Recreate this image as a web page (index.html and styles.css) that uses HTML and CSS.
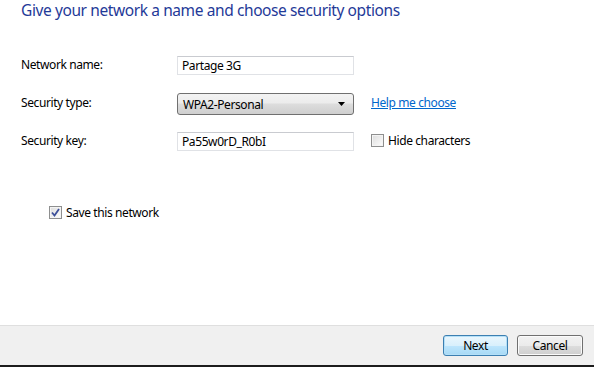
FILE: index.html
```html
<!DOCTYPE html>
<html lang="en">
  <head>
    <meta charset="UTF-8" />
    <title>Set up an ad hoc network</title>
    <link rel="stylesheet" href="styles.css">
  </head>
  <body>
    <div class="window">
      <div class="main">
        <h1 class="title">Give your network a name and choose security options</h1>

        <div class="form">
          <label class="label">Network name:</label>
          <div class="textbox">Partage 3G</div>
          <div></div>

          <label class="label">Security type:</label>
          <div class="select">
            <span>WPA2-Personal</span>
            <svg class="arrow" width="7" height="4" viewBox="0 0 7 4">
              <path d="M0 0 H7 L3.5 4 Z" fill="#000" />
            </svg>
          </div>
          <a class="link" href="#">Help me choose</a>

          <label class="label">Security key:</label>
          <div class="textbox">Pa55w0rD_R0bI</div>
          <div class="option">
            <span class="check"></span>
            <span>Hide characters</span>
          </div>
        </div>

        <div class="option save">
          <span class="check checked">
            <svg width="9" height="9" viewBox="0 0 9 9">
              <path d="M1 4.5 L3.5 7.5 L8 1" fill="none" stroke="#3c4f99" stroke-width="1.8" />
            </svg>
          </span>
          <span>Save this network</span>
        </div>
      </div>

      <div class="footer">
        <button class="btn default">Next</button>
        <button class="btn">Cancel</button>
      </div>
    </div>
  </body>
</html>
```

FILE: styles.css
```css
body {
  margin: 0;
  padding: 0;
  font-family: "Noto Sans", "Open Sans", sans-serif;
  font-size: 12px;
  letter-spacing: -0.4px;
  color: #000;
  background-color: #fff;
}

.window {
  height: 367px;
  display: flex;
  flex-direction: column;
}

.main {
  flex-grow: 1;
  padding: 0 21px;
}

.title {
  margin: 0;
  font-size: 15.5px;
  font-weight: normal;
  line-height: 21px;
  letter-spacing: -0.4px;
  color: #1f3a98;
}

/* three rows, one every 38px */
.form {
  display: grid;
  grid-template-columns: 156px 177px 1fr;
  grid-auto-rows: 38px;
  align-items: start;
  margin-top: 34px;
}

.label {
  padding-top: 2px;
  line-height: 15px;
}

.textbox {
  height: 17px;
  margin-top: 1px;
  padding: 0 4px;
  line-height: 18px;
  border: 1px solid #e0e2e6;
  border-top-color: #c9cbd0;
}

.select {
  height: 20px;
  display: flex;
  align-items: center;
  justify-content: space-between;
  padding: 0 8px 0 5px;
  border: 1px solid #707070;
  border-radius: 3px;
  background: linear-gradient(#f3f3f3 0%, #ececec 45%, #dddddd 50%, #cfcfcf 100%);
}

.link {
  margin-left: 17px;
  padding-top: 2px;
  line-height: 15px;
  color: #0066cc;
  text-decoration: underline;
}

.option {
  display: flex;
  align-items: center;
  gap: 4px;
  margin-left: 17px;
  margin-top: 3px;
  line-height: 13px;
}

.check {
  width: 11px;
  height: 11px;
  display: flex;
  align-items: center;
  justify-content: center;
  border: 1px solid #8e8f8f;
  background: linear-gradient(135deg, #dcdcdc, #fdfdfd);
  box-shadow: inset 0 0 0 1px #f4f4f4;
}

.save {
  margin-left: 28px;
  margin-top: 37px;
}

.footer {
  display: flex;
  justify-content: flex-end;
  gap: 9px;
  padding: 9px 11px 9px 0;
  background-color: #f0f0f0;
  border-top: 1px solid #dfdfdf;
  border-bottom: 2px solid #1c1c1c;
}

.btn {
  width: 65px;
  height: 21px;
  padding: 0;
  font-family: "Noto Sans", "Open Sans", sans-serif;
  font-size: 12px;
  letter-spacing: -0.4px;
  color: #000;
  border: 1px solid #707070;
  border-radius: 3px;
  background: linear-gradient(#f2f2f2 0%, #ebebeb 50%, #dddddd 51%, #cfcfcf 100%);
  box-shadow: inset 0 0 0 1px #fbfbfb;
}

.btn + .btn {
  width: 66px;
}

.btn.default {
  border-color: #3c7fb1;
  background: linear-gradient(#eaf6fd 0%, #d9f0fc 50%, #bee6fd 51%, #a7d9f5 100%);
  box-shadow: inset 0 0 0 1px #b4e0f8;
}
```
